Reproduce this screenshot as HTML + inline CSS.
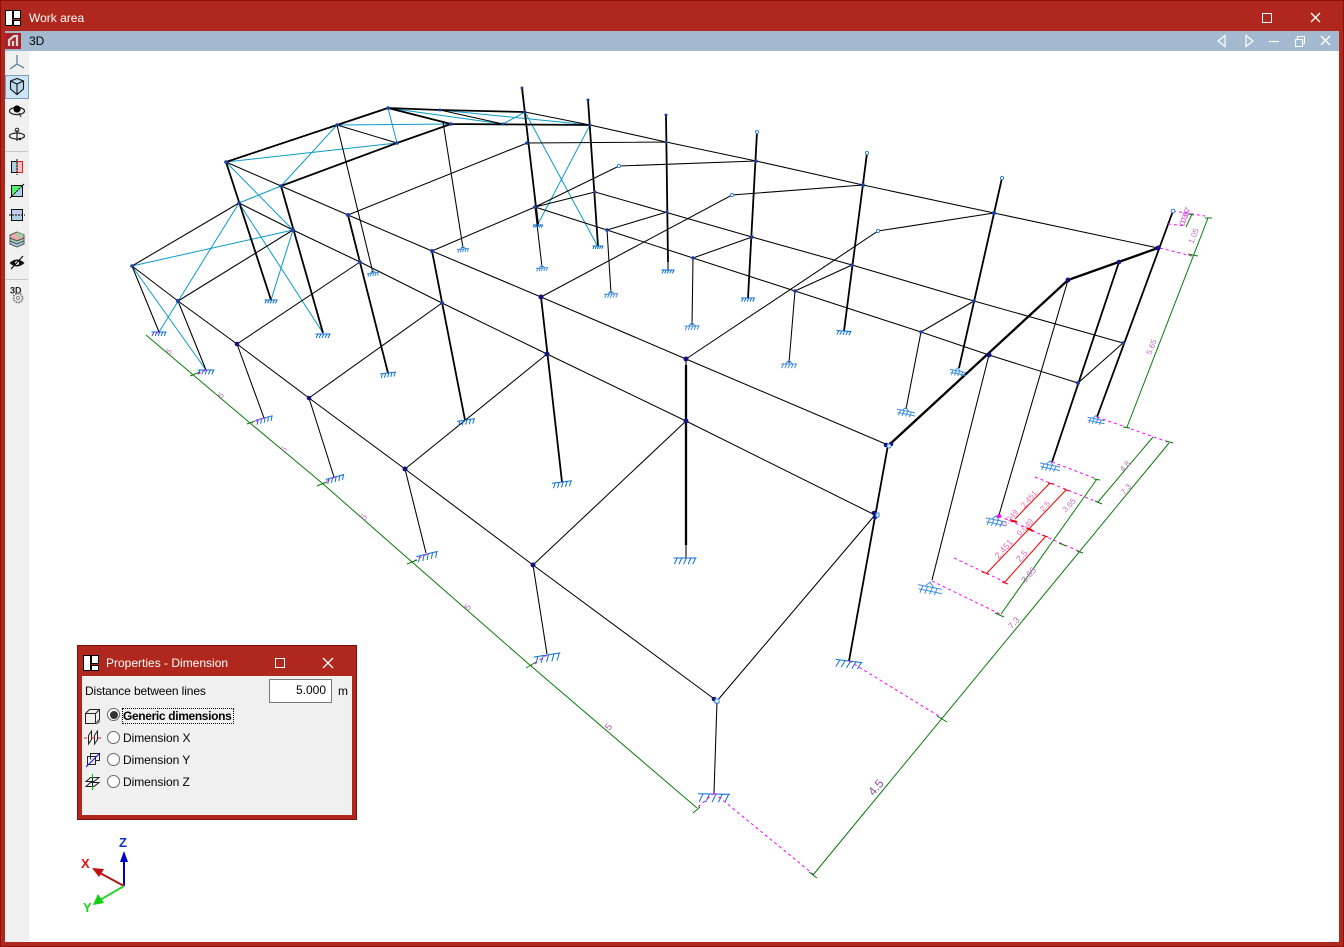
<!DOCTYPE html>
<html>
<head>
<meta charset="utf-8">
<title>Work area</title>
<style>
html,body{margin:0;padding:0;background:#fff;}
#root{position:relative;width:1344px;height:947px;overflow:hidden;background:#b0281d;font-family:"Liberation Sans",sans-serif;font-size:12px;color:#000;}
.abs{position:absolute;}
#bar{left:5px;top:31px;width:1334px;height:20px;background:#a3b9d0;}
#tool{left:5px;top:51px;width:24px;height:891px;background:#f0f0f0;}
#view{left:29px;top:51px;width:1310px;height:891px;background:#fff;}
#frame{left:0;top:0;width:1342px;height:945px;border:1px solid #8a1208;}
svg{position:absolute;left:0;top:0;}
#panel{left:77px;top:645px;width:278px;height:173px;background:#b0281d;border:1px solid #7a1010;}
#pin{left:4px;top:30px;width:270px;height:139px;background:#f0f0f0;}
.t{position:absolute;white-space:nowrap;line-height:14px;}
#inp{left:187px;top:3px;width:61px;height:22px;background:#fff;border:1px solid #7a7a7a;text-align:right;line-height:20px;}
#inp span{margin-right:5px;}
.r{position:absolute;left:25px;width:11px;height:11px;border:1px solid #666;border-radius:50%;background:#fff;}
#dot{left:27.5px;top:35px;width:8px;height:8px;border-radius:50%;background:#333;position:absolute;}
#focus{left:40px;top:32px;width:110px;height:14px;border:1px dotted #000;}
</style>
</head>
<body>
<div id="root">
<div class="abs" id="bar"></div>
<div class="abs" id="tool"></div>
<div class="abs" id="view"></div>
<div class="abs" id="frame"></div>
<div class="t" style="left:29px;top:11px;color:#fff;">Work area</div>
<div class="t" style="left:29px;top:34px;">3D</div>

<svg width="1344" height="947" viewBox="0 0 1344 947" fill="none">
<defs>
<path id="s" vector-effect="non-scaling-stroke" d="M-.5 0H.5M-.34 0L-.46 .26M-.14 0L-.26 .26M.06 0L-.06 .26M.26 0L.14 .26M.46 0L.34 .26"/>
<path id="b" vector-effect="non-scaling-stroke" d="M-.5 0H.5M-.34 0L-.46 .26M-.14 0L-.26 .26M.06 0L-.06 .26M.26 0L.14 .26M.46 0L.34 .26M-.22 0L0 -.24L.22 0"/>
<path id="c" vector-effect="non-scaling-stroke" d="M-.5 -.1L.5 .1M-.46 .08L.5 .28M-.3 -.06L-.42 .24M-.1 -.02L-.22 .28M.1 .02L-.02 .3M.3 .06L.18 .34M-.2 -.04L0 -.2L.16 .03"/>
</defs>

<!-- window buttons -->
<g stroke="#fff" stroke-width="1">
<rect x="1262.5" y="13.5" width="9" height="9"/>
<path stroke-width="1.4" d="M1311 13L1320 22M1320 13L1311 22"/>
<path stroke-width="1.2" d="M1225 35.5L1218 41L1225 46.5ZM1246 35.5L1253 41L1246 46.5Z"/>
<path stroke-width="1.2" d="M1269 41.5H1279"/>
<path stroke-width="1.1" d="M1295.5 39.5h7v7h-7zM1297.5 39V36.5h7v7h-2"/>
<path stroke-width="1.5" d="M1321 36L1330 45M1330 36L1321 45"/>
</g>
<!-- logo -->
<g stroke="#000" stroke-width="1" fill="#fff">
<rect x="5.5" y="10.5" width="7" height="15"/><rect x="13.5" y="10.5" width="7" height="8"/><rect x="13.5" y="20.5" width="7" height="5"/>
</g>
<!-- 3D icon -->
<rect x="5" y="33" width="16" height="16" fill="#a8202c"/>
<path d="M9 46V40L14 36H17V46M13 46V41" stroke="#d8d8d8" stroke-width="2.2"/>

<!-- toolbar -->
<rect x="5.5" y="75.5" width="23" height="23" fill="#cce4f4" stroke="#7ba0bb"/>
<path d="M17 55V64M17 64L10 69M17 64L24 68" stroke="#4f7a95" stroke-width="1.2"/>
<path d="M10.5 81L17 78.5L23.500 81V89L17 94.500L10.500 89ZM10.5 81L17 84V94.500M23.500 81L17 84" fill="#b8dcef" stroke="#111" stroke-width="1.1"/>
<ellipse cx="17" cy="111" rx="7.500" ry="3.600" stroke="#222" stroke-width="1.200"/>
<circle cx="17" cy="109" r="3.600" fill="#000"/><path d="M19 113l2 4" stroke="#222"/>
<path d="M17 130V141" stroke="#222" stroke-width="1.200"/><circle cx="17" cy="130" r="1.800" stroke="#222"/>
<ellipse cx="17" cy="136" rx="7.500" ry="3" stroke="#222" stroke-width="1.200"/><circle cx="20" cy="139" r="1.200" fill="#000"/>
<path d="M5 151.500H28M5 279.500H28" stroke="#c8c8c8"/>
<rect x="11.500" y="161.500" width="11" height="11" fill="#a8cfe6" stroke="#111"/><rect x="17" y="162" width="5" height="10" fill="#f9c0c0"/><rect x="17" y="161.500" width="5.500" height="11" stroke="#e02020"/><path d="M17 159V175" stroke="#000" stroke-dasharray="2 1"/>
<rect x="11.500" y="185.500" width="11" height="11" fill="#a8cfe6" stroke="#111"/><path d="M12 196V186H22Z" fill="#50f070"/><path d="M10 198L24 184" stroke="#000" stroke-dasharray="2 1"/>
<rect x="11.500" y="209.500" width="11" height="11" fill="#a8cfe6" stroke="#111"/><rect x="12" y="210" width="10" height="5" fill="#c8c8f0"/><path d="M9 215H25" stroke="#000" stroke-dasharray="2 1"/>
<path d="M17 232L24 235V238L17 241L10 238V235Z" fill="#f0a8a8" stroke="#555"/><path d="M17 232L24 235L17 238Z" fill="#90d8a8"/><path d="M10 238L17 241L24 238V241L17 244L10 241Z" fill="#a0d8b8" stroke="#555"/><path d="M10 241L17 244L24 241V244L17 247L10 244Z" fill="#a8cfe6" stroke="#555"/>
<path d="M9.500 263Q17 256 24.500 263Q17 270 9.500 263Z" fill="#111"/><circle cx="17" cy="263" r="2" fill="#f0f0f0"/><path d="M11 269L23 256" stroke="#111" stroke-width="1.200"/>
<text x="10" y="293.500" font-family="Liberation Sans" font-size="9" font-weight="700" fill="#222">3D</text>
<circle cx="18" cy="298" r="4.500" stroke="#777" stroke-width="1.800" stroke-dasharray="1.600 1"/><circle cx="18" cy="298" r="1.600" stroke="#888"/>

<!-- cyan bracing -->
<path stroke="#0a9ac8" stroke-width="1" d="M132 266L293 230M132 266L206 370M239 203L159 332M239 203L281 186M226 162L293 230M239 203L323 333M293 230L271 300M226 162L397 143M337 125L281 186M337 125L451 124M388 108L397 143M388 108L503 124M440 110L590 125M388 108L451 124M503 124L525 112M525 112L597 245M590 125L538 224"/>

<!-- thin black members -->
<path stroke="#000" stroke-width="1.050" d="M226 162L281 186L348 215L432 251L541 297L686 359L888 445
M239 203L293 230L360 262L442 303L547 354L686 421L875 515
M132 266L178 301L237 344L309 398L405 469L533 565L717 701
M525 112L590 125L666 142L756 161L863 185L994 213L1158 248
M595 192L752 237L852 265L974 301L1123 343
M535 207L607 230L693 258L795 291L921 332L989 355L1078 383
M132 266L239 203M178 301L293 230M237 344L360 262M309 398L442 303M405 469L547 354M533 565L686 421M717 701L875 515
M348 215L527 143M527 143L666 142M432 251L535 207L619 166L756 161M541 297L732 195L863 185M686 359L878 231L994 213
M535 207L595 192M607 230L667 212M693 258L752 237M795 291L852 265M921 332L974 301M1078 383L1123 343
M337 125L397 143M440 110L503 124M525 112L590 125
M132 266L159 332M178 301L206 370M237 344L264 418M309 398L334 477M405 469L426 553M533 565L547 654M717 701L714 793
M337 125L373 273M443 122L463 248M535 207L542 267M607 230L611 293M693 258L692 325M795 291L789 363M921 332L906 409
M1068 280L999 515M989 355L932 580M686 545V558M686 359V367M668 262V270M538 224V226"/>

<!-- thick black members -->
<path stroke="#000" stroke-width="1.800" d="M226 162L337 125L388 108M388 108L440 110L525 112M388 108L451 124M451 124L590 125M281 186L397 143L451 124
M226 162L271 300M281 186L323 333M348 215L388 373M432 251L465 420M541 297L562 482M888 445L849 661
M522 88L538 224M588 100L598 246M666 115L668 262M757 132L748 298M867 153L844 331M1002 178L959 368
M1119 262L1052 462M1173 211L1097 417"/>
<path stroke="#000" stroke-width="2.300" d="M686 365V545M889 445L1068 280L1158 248"/>

<!-- supports -->
<g stroke="#0a6fd0" stroke-width="1">
<use href="#s" transform="translate(159 332) scale(15)"/>
<use href="#s" transform="translate(206 370) scale(17)"/>
<use href="#s" transform="translate(271 300) scale(13)"/>
<use href="#s" transform="translate(323 334) scale(15)"/>
<use href="#s" transform="translate(388 373) rotate(-7) scale(16)"/>
<use href="#s" transform="translate(264 418) rotate(-15) scale(18)"/>
<use href="#s" transform="translate(335 477) rotate(-15) scale(19)"/>
<use href="#s" transform="translate(427 554) rotate(-14) scale(22)"/>
<use href="#s" transform="translate(547 655) rotate(-9) scale(27)"/>
<use href="#s" transform="translate(714 794) rotate(1) scale(32)"/>
<use href="#s" transform="translate(849 661) rotate(7) scale(27)"/>
<use href="#s" transform="translate(562 482) rotate(-7) scale(20)"/>
<use href="#s" transform="translate(466 420) rotate(-9) scale(18)"/>
<use href="#s" transform="translate(685 558) scale(23)"/>
<use href="#s" transform="translate(538 225) scale(10)"/>
<use href="#s" transform="translate(598 246) scale(11)"/>
<use href="#s" transform="translate(668 270) scale(13)"/>
<use href="#s" transform="translate(748 298) scale(14)"/>
<use href="#s" transform="translate(844 331) rotate(4) scale(15)"/>
</g>
<g stroke="#3f8ee0" stroke-width="1">
<use href="#b" transform="translate(373 273) rotate(-8) scale(12)"/>
<use href="#b" transform="translate(463 249) rotate(-6) scale(12)"/>
<use href="#b" transform="translate(542 268) rotate(-4) scale(12)"/>
<use href="#b" transform="translate(611 294) rotate(-3) scale(14)"/>
<use href="#b" transform="translate(692 326) rotate(-2) scale(15)"/>
<use href="#b" transform="translate(789 364) scale(16)"/>
<use href="#c" transform="translate(906 411) scale(18)"/>
<use href="#c" transform="translate(958 371) scale(16)"/>
<use href="#c" transform="translate(1096 419) scale(17)"/>
<use href="#c" transform="translate(1050 465) scale(20)"/>
<use href="#c" transform="translate(996 520) scale(21)"/>
<use href="#c" transform="translate(930 587) scale(24)"/>
</g>

<!-- magenta extension lines -->
<path stroke="#ff00ff" stroke-width="1" stroke-dasharray="3 3" d="M714 793L813 874M849 661L942 718M1097 417L1171 443M1052 462L1097 479M1035 477L1100 503M999 516L1083 553M954 558L1007 583M932 581L1000 614M1173 211L1205 216M1168 224L1187 226M1160 248L1192 256M159 332L152 335M206 370L196 375M264 418L252 423M335 477L322 484M427 554L412 562M547 655L531 666M714 793L697 808"/>

<!-- green dimension lines -->
<path stroke="#0a7d0a" stroke-width="1" d="M146 335L250 423L322 483L412 562L531 666L697 808
M813 875L1169 443M1127 427L1208 218M1192 214L1186 227M1153 437L1098 502M1097 479L1001 614
M693 813L700 807M190 376L200 372M247 424L255 421M317 486L327 482M407 564L417 560M526 668L536 662
M809 872L817 878M937 716L947 722M1166 441L1173 443M1123 427L1130 428M1188 254L1198 256M1205 218L1212 218M1188 214L1194 215M1095 501L1102 504M1094 479L1100 480M995 613L1004 617M1059 543L1066 546M1077 551L1083 553"/>

<!-- red dimension lines -->
<path stroke="#f00000" stroke-width="1" d="M1050 483L1015 519M1066 490L987 573M1046 536L1005 582M1048 483L1054 484M1064 489L1069 491M982 572L989 574M1002 582L1008 584M1042 535L1048 537"/>
<path stroke="#f00000" stroke-width="2" d="M1010 520L1017 522M1027 528L1033 531"/>
<circle cx="999" cy="516" r="2" fill="#ff00ff"/>

<!-- nodes -->
<g fill="#1c3fa8">
<circle cx="132" cy="266" r="1.800"/><circle cx="178" cy="301" r="2"/><circle cx="239" cy="203" r="1.800"/><circle cx="293" cy="230" r="2"/><circle cx="226" cy="162" r="1.800"/><circle cx="281" cy="186" r="1.800"/><circle cx="337" cy="125" r="1.800"/><circle cx="397" cy="143" r="1.800"/><circle cx="388" cy="108" r="1.800"/><circle cx="451" cy="124" r="1.800"/><circle cx="440" cy="110" r="1.500"/><circle cx="503" cy="124" r="1.500"/><circle cx="525" cy="112" r="1.500"/><circle cx="590" cy="125" r="1.500"/><circle cx="527" cy="143" r="1.800"/><circle cx="348" cy="215" r="2"/><circle cx="360" cy="262" r="1.800"/><circle cx="432" cy="251" r="2"/><circle cx="442" cy="303" r="2"/><circle cx="535" cy="207" r="1.800"/><circle cx="595" cy="192" r="1.500"/><circle cx="607" cy="230" r="1.800"/><circle cx="666" cy="142" r="1.500"/><circle cx="667" cy="212" r="1.500"/><circle cx="693" cy="258" r="1.800"/><circle cx="756" cy="161" r="1.800"/><circle cx="752" cy="237" r="1.800"/><circle cx="795" cy="291" r="1.800"/><circle cx="863" cy="185" r="2"/><circle cx="852" cy="265" r="1.800"/><circle cx="994" cy="213" r="2"/><circle cx="974" cy="301" r="1.800"/><circle cx="921" cy="332" r="1.800"/><circle cx="1123" cy="343" r="1.800"/><circle cx="1078" cy="383" r="2"/>
<circle cx="522" cy="88" r="1.500"/><circle cx="588" cy="100" r="1.500"/><circle cx="666" cy="115" r="1.500"/>
</g>
<g fill="#12127e">
<circle cx="237" cy="344" r="2.300"/><circle cx="309" cy="398" r="2.300"/><circle cx="405" cy="469" r="2.500"/><circle cx="533" cy="565" r="2.500"/><circle cx="541" cy="297" r="2.500"/><circle cx="547" cy="354" r="2.500"/><circle cx="686" cy="359" r="2.500"/><circle cx="686" cy="421" r="2.500"/><circle cx="886" cy="445" r="2.300"/><circle cx="891" cy="444" r="2.300"/><circle cx="874" cy="513" r="2.300"/><circle cx="875" cy="517" r="2.300"/><circle cx="714" cy="699" r="2.300"/><circle cx="1068" cy="280" r="2.500"/><circle cx="1119" cy="262" r="2.300"/><circle cx="1158" cy="248" r="2.500"/><circle cx="989" cy="355" r="2.500"/>
</g>
<g stroke="#2f7fd8" stroke-width="1" fill="#fff">
<circle cx="757" cy="132" r="1.600"/><circle cx="867" cy="153" r="1.600"/><circle cx="1002" cy="178" r="1.600"/><circle cx="619" cy="166" r="1.600"/><circle cx="732" cy="195" r="1.600"/><circle cx="878" cy="231" r="1.600"/><circle cx="1173" cy="211" r="1.800"/>
<rect x="715" y="699" width="4" height="4"/><rect x="876" y="513" width="3" height="4"/><circle cx="889" cy="446" r="2"/>
</g>

<!-- dimension text -->
<g font-family="Liberation Sans" fill="#c070c0">
<text font-size="8" transform="translate(171 353) rotate(-50)" text-anchor="middle">5</text>
<text font-size="8" transform="translate(223 397) rotate(-50)" text-anchor="middle">5</text>
<text font-size="8" transform="translate(286 451) rotate(-50)" text-anchor="middle">5</text>
<text font-size="9" transform="translate(366 519) rotate(-50)" text-anchor="middle">5</text>
<text font-size="9" transform="translate(470 609) rotate(-50)" text-anchor="middle">5</text>
<text font-size="10" fill="#a860a8" transform="translate(611 729) rotate(-50)" text-anchor="middle">5</text>
<text font-size="12" fill="#885a90" transform="translate(879 790) rotate(-50)" text-anchor="middle">4.5</text>
<text font-size="8" transform="translate(1154 348) rotate(-68)" text-anchor="middle">5.65</text>
<text font-size="8" transform="translate(1196 237) rotate(-68)" text-anchor="middle">1.05</text>
<text font-size="8" fill="#d050d0" transform="translate(1187 219) rotate(-68)" text-anchor="middle">0.35</text>
<text font-size="8" fill="#d050d0" transform="translate(1188 216) rotate(-68)" text-anchor="middle">0.07</text>
<text font-size="8" transform="translate(1127 468) rotate(-48)" text-anchor="middle">4.8</text>
<text font-size="8" transform="translate(1128 491) rotate(-48)" text-anchor="middle">7.3</text>
<text font-size="8" transform="translate(1071 507) rotate(-48)" text-anchor="middle">3.65</text>
<text font-size="9" transform="translate(1031 577) rotate(-48)" text-anchor="middle">3.65</text>
<text font-size="9" transform="translate(1016 625) rotate(-48)" text-anchor="middle">7.3</text>
<g fill="#e070c0">
<text font-size="8" transform="translate(1031 501) rotate(-48)" text-anchor="middle">2.451</text>
<text font-size="8" transform="translate(1047 508) rotate(-48)" text-anchor="middle">2.5</text>
<text font-size="8" transform="translate(1012 520) rotate(-48)" text-anchor="middle">0.049</text>
<text font-size="8" transform="translate(1027 529) rotate(-48)" text-anchor="middle">0.049</text>
<text font-size="9" transform="translate(1006 551) rotate(-48)" text-anchor="middle">2.451</text>
<text font-size="9" transform="translate(1024 558) rotate(-48)" text-anchor="middle">2.5</text>
</g>
</g>

<!-- axes -->
<path d="M124 886V858" stroke="#0000d0" stroke-width="2"/>
<path d="M124 851L128 862H120Z" fill="#0000d0"/>
<path d="M124 886L100 873" stroke="#b01818" stroke-width="2"/>
<path d="M92 868L104 869L99 877Z" fill="#c01010"/>
<path d="M124 886L100 900" stroke="#30d030" stroke-width="2"/>
<path d="M93 905L98 894L104 903Z" fill="#10d010"/>
<text x="119" y="847" font-family="Liberation Sans" font-size="13" font-weight="700" fill="#1030d8">Z</text>
<text x="81" y="868" font-family="Liberation Sans" font-size="13" font-weight="700" fill="#e81010">X</text>
<text x="83" y="912" font-family="Liberation Sans" font-size="13" font-weight="700" fill="#20d020">Y</text>
</svg>

<!-- panel -->
<div class="abs" id="panel">
<svg width="278" height="30" style="left:0;top:0;" fill="none">
<g stroke="#000" fill="#fff"><rect x="5.500" y="9.500" width="7" height="15"/><rect x="13.500" y="9.500" width="7" height="8"/><rect x="13.500" y="19.500" width="7" height="5"/></g>
<rect x="197.500" y="12.500" width="9" height="9" stroke="#fff"/>
<path d="M245 12L255 22M255 12L245 22" stroke="#fff" stroke-width="1.300"/>
</svg>
<div class="t" style="left:28px;top:10px;color:#fff;">Properties - Dimension</div>
<div class="abs" id="pin">
<div class="t" style="left:3px;top:8px;letter-spacing:-.12px;">Distance between lines</div>
<div class="abs" id="inp"><span>5.000</span></div>
<div class="t" style="left:256px;top:8px;">m</div>
<svg width="24" height="90" style="left:2px;top:30px;" fill="none">
<path d="M1.500 7.500h10v10h-10zM1.500 7.500l4-4h10v10l-4 4M11.500 7.500l4-4" stroke="#222"/><path d="M12 18l4-3" stroke="#888" stroke-width="2"/>
<path d="M4.500 38V29.500L7.500 25V33.500ZM10.500 38V29.500L13.500 25V33.500Z" stroke="#222"/><path d="M0 32h3M7.500 32h3M14 32h3" stroke="#e02020"/>
<path d="M6.500 53.500V47.500h9v7h-4M3.500 50.500h8v8h-8z" stroke="#222"/><path d="M2 61L16 47" stroke="#1010e0"/>
<path d="M6.500 71.500H15L10 75.500H2ZM6.500 76.500H15L10 80.500H2Z" stroke="#222"/><path d="M8.500 68V72M8.500 80V84" stroke="#10c010"/><path d="M8.500 72V80" stroke="#222"/>
</svg>
<div class="r" style="top:32px;"></div><div id="dot"></div>
<div class="r" style="top:55px;"></div>
<div class="r" style="top:77px;"></div>
<div class="r" style="top:99px;"></div>
<div class="abs" id="focus"></div>
<div class="t" style="left:41px;top:33px;font-weight:700;letter-spacing:-.35px;">Generic dimensions</div>
<div class="t" style="left:41px;top:55px;letter-spacing:-.05px;">Dimension X</div>
<div class="t" style="left:41px;top:77px;letter-spacing:-.05px;">Dimension Y</div>
<div class="t" style="left:41px;top:99px;letter-spacing:-.05px;">Dimension Z</div>
</div>
</div>
</div>
</body>
</html>
